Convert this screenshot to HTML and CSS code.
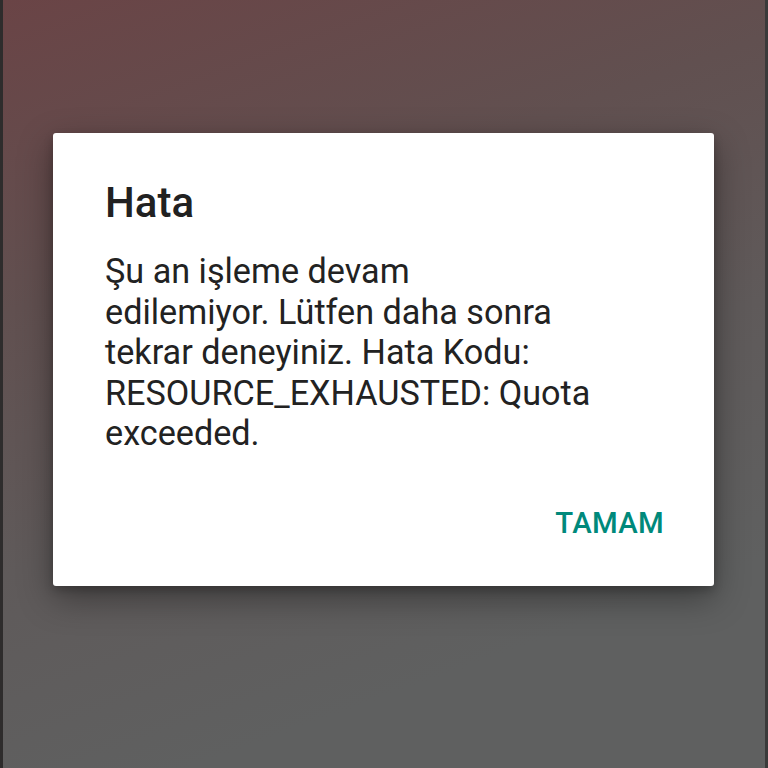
FILE: index.html
```html
<!DOCTYPE html>
<html lang="tr">
<head>
<meta charset="utf-8">
<title>Hata</title>
<link rel="stylesheet" href="styles.css">
</head>
<body>
<div class="screen">
  <div class="dialog">
    <h1 class="dialog-title">Hata</h1>
    <p class="dialog-message">Şu an işleme devam<br>edilemiyor. Lütfen daha sonra<br>tekrar deneyiniz. Hata Kodu:<br>RESOURCE_EXHAUSTED: Quota<br>exceeded.</p>
    <div class="dialog-actions">
      <button class="dialog-button">TAMAM</button>
    </div>
  </div>
</div>
</body>
</html>
```

FILE: styles.css
```css
html, body {
  margin: 0;
  padding: 0;
  width: 768px;
  height: 768px;
  overflow: hidden;
}

body {
  font-family: Roboto, "Noto Sans", "Liberation Sans", sans-serif;
  background: #5f5f5f;
}

.screen {
  box-sizing: border-box;
  width: 768px;
  height: 768px;
  border-left: 3px solid #2e2c2c;
  border-right: 3px solid #3a3a3a;
  padding: 133px 51px 0 50px;
  background: linear-gradient(160deg, #6a4446 0%, #615050 30%, #5f5a5a 55%, #5f6060 80%, #5f6060 100%);
}

.dialog {
  background: #ffffff;
  border-radius: 3px;
  height: 453px;
  box-sizing: border-box;
  padding: 45px 50px 25px 52px;
  box-shadow: 0 12px 34px rgba(0, 0, 0, 0.38), 0 4px 10px rgba(0, 0, 0, 0.2);
  display: flex;
  flex-direction: column;
}

.dialog-title {
  margin: 0;
  font-size: 42px;
  font-weight: 500;
  line-height: 50px;
  color: #212121;
}

.dialog-message {
  margin: 23px 0 0 0;
  font-size: 34.2px;
  font-weight: 400;
  line-height: 40.5px;
  color: #222222;
}

.dialog-actions {
  display: flex;
  justify-content: flex-end;
  margin-top: 31px;
}

.dialog-button {
  border: none;
  background: transparent;
  padding: 0;
  margin: 0;
  height: 76px;
  line-height: 76px;
  font-family: Roboto, "Noto Sans", "Liberation Sans", sans-serif;
  font-size: 29.4px;
  font-weight: 500;
  letter-spacing: 0.3px;
  color: #00897b;
  cursor: pointer;
}
```
